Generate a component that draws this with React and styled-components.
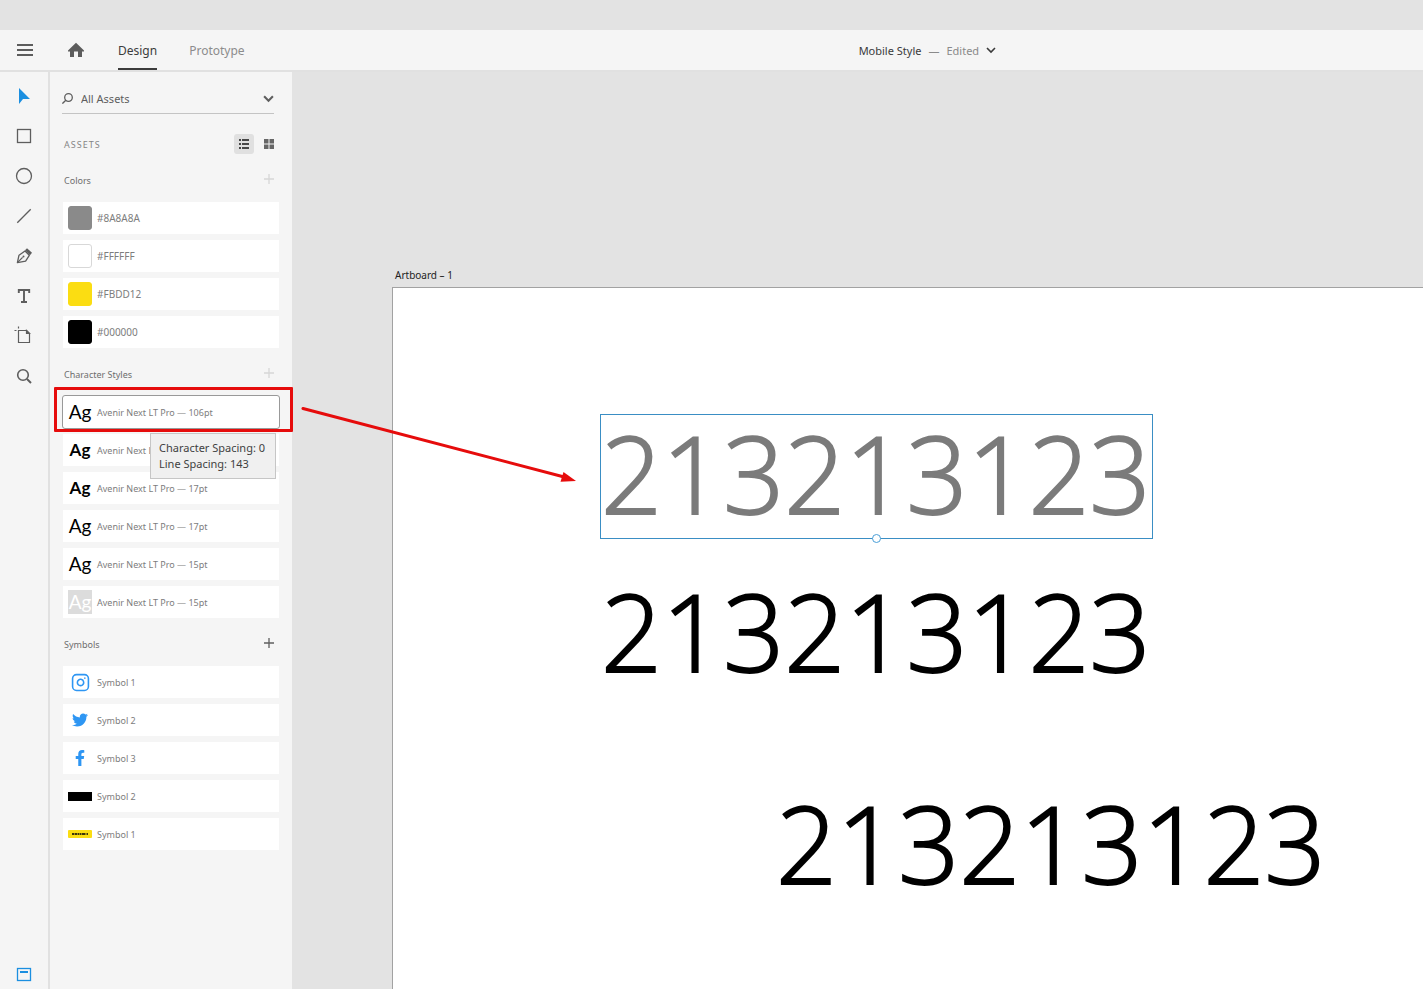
import React from "react";
import styled, { createGlobalStyle, css } from "styled-components";
import { FaTwitter, FaFacebookF } from "react-icons/fa";
import { Instagram } from "lucide-react";

const GlobalStyle = createGlobalStyle`
  *, *::before, *::after { box-sizing: border-box; }
  body { margin: 0; font-family: "Noto Sans", "Open Sans", sans-serif; font-size: 12px; color: #4b4b4b; background: #e3e3e3; }
  button, select { font: inherit; color: inherit; border: 0; background: none; padding: 0; margin: 0; }
  ul { list-style: none; padding: 0; margin: 0; }
  h2, h3, p { margin: 0; font-weight: 400; }
  svg { display: block; flex: none; }
`;

const Window = styled.div`
  display: flex;
  flex-direction: column;
  height: 100vh;
  overflow: hidden;
`;

const TitleStrip = styled.div`
  flex: none;
  height: 30px;
`;

const TopBar = styled.header`
  flex: none;
  display: flex;
  height: 42px;
  background: #f5f5f5;
  border-bottom: 2px solid #e1e1e1;
`;

const BarButton = styled.button`
  display: flex;
  align-items: center;
  margin-right: 33px;
  color: #5c5c5c;

  &:first-child {
    margin-left: 16px;
  }
`;

const Tabs = styled.nav`
  display: flex;
  gap: 32px;
`;

const Tab = styled.button`
  height: 40px;
  padding-top: 2px;
  border-bottom: 2px solid ${(p) => (p.$active ? "#3c3c3c" : "transparent")};
  color: ${(p) => (p.$active ? "#3c3c3c" : "#8c8c8c")};
`;

const DocTitle = styled.button`
  display: flex;
  align-items: center;
  gap: 7px;
  margin-left: auto;
  margin-right: 30%;
  font-size: 11px;
  color: #3a3a3a;
`;

const Status = styled.span`
  color: #8a8a8a;
`;

const Workspace = styled.div`
  flex: 1;
  display: flex;
  min-height: 0;
`;

const ToolBar = styled.nav`
  flex: none;
  display: flex;
  flex-direction: column;
  align-items: center;
  width: 50px;
  padding-top: 4px;
  background: #f5f5f5;
  border-right: 2px solid #e1e1e1;
`;

const Tool = styled.button`
  display: grid;
  place-items: center;
  width: 40px;
  height: ${(p) => (p.$last ? "30px" : "40px")};
  color: ${(p) => (p.$active ? "#1b8fe0" : "#5e5e5e")};
  margin-top: ${(p) => (p.$last ? "auto" : "0")};
`;

const Panel = styled.aside`
  position: relative;
  z-index: 1;
  flex: none;
  width: 242px;
  padding: 12px 13px 0;
  background: #f5f5f5;
`;

const Filter = styled.label`
  display: flex;
  align-items: center;
  gap: 8px;
  height: 30px;
  margin: 0 5px 0 -1px;
  border-bottom: 1px solid #c4c4c4;
  color: #5e5e5e;
`;

const FilterSelect = styled.select`
  flex: 1;
  appearance: none;
  font-size: 11px;
`;

const PanelHead = styled.div`
  display: flex;
  align-items: center;
  height: 20px;
  margin-top: 20px;
  padding-left: 1px;
`;

const PanelTitle = styled.h2`
  flex: 1;
  font-size: 9px;
  letter-spacing: 1px;
  color: #858585;
`;

const ViewButton = styled.button`
  display: grid;
  place-items: center;
  width: 20px;
  height: 20px;
  margin-left: 5px;
  border-radius: 3px;
  background: ${(p) => (p.$active ? "#e0e0e0" : "transparent")};
  color: ${(p) => (p.$active ? "#2c2c2c" : "#666")};
`;

const SectionHead = styled.div`
  display: flex;
  align-items: center;
  justify-content: space-between;
  height: 44px;
  margin-top: 4px;
  padding: 0 5px 0 1px;
`;

const SectionTitle = styled.h3`
  font-size: 9px;
  color: #6e6e6e;
`;

const AddButton = styled.button`
  color: ${(p) => (p.$enabled ? "#5f5f5f" : "#d6d6d6")};
`;

const List = styled.ul`
  display: grid;
  gap: 6px;
`;

const Item = styled.li`
  position: relative;
`;

const Row = styled.button`
  display: flex;
  align-items: center;
  gap: 5px;
  width: 100%;
  height: 32px;
  padding: 0 5px;
  background: #fff;
  font-size: ${(p) => (p.$wide ? "10px" : "9px")};
  color: #7d7d7d;
  text-align: left;
  ${(p) => p.$selected && css`
    border-radius: 2px;
    outline: 1px solid #999;
  `}
`;

const Swatch = styled.span`
  width: 24px;
  height: 24px;
  border-radius: 3px;
  background: ${(p) => p.$color};
  border: 1px solid ${(p) => (p.$color === "#FFFFFF" ? "#d8d8d8" : p.$color)};
`;

const Sample = styled.span`
  width: 24px;
  height: 24px;
  font-family: Lato, "Noto Sans", sans-serif;
  font-size: ${(p) => (p.$bold ? 17 : 19)}px;
  line-height: 24px;
  text-align: center;
  font-weight: ${(p) => (p.$bold ? 700 : 400)};
  color: ${(p) => (p.$inverse ? "#fff" : "#000")};
  background: ${(p) => (p.$inverse ? "#dcdcdc" : "transparent")};
`;

const Thumb = styled.span`
  display: grid;
  place-items: center;
  width: 24px;
  height: 24px;
  color: #2e96f3;
`;

const Highlight = styled.div`
  position: absolute;
  inset: -9px -14px -4px -9px;
  border: 3px solid #e60c0c;
  border-radius: 1px;
  pointer-events: none;
`;

const Tooltip = styled.p`
  position: absolute;
  z-index: 2;
  top: 37px;
  left: 87px;
  padding: 6px 10px 6px 8px;
  border: 1px solid #c6c6c6;
  background: #f0f0f0;
  font-size: 11px;
  line-height: 16px;
  color: #3f3f3f;
  white-space: nowrap;
`;

const Canvas = styled.main`
  position: relative;
  flex: 1;
  min-width: 0;
  overflow: hidden;
  background: #e3e3e3;
`;

const ArtboardLabel = styled.span`
  position: absolute;
  left: 103px;
  top: 195px;
  font-size: 10px;
  line-height: 16px;
  color: #222;
`;

const Artboard = styled.section`
  position: absolute;
  inset: 215px 0 0 100px;
  border: solid #a2a2a2;
  border-width: 1px 0 0 1px;
  background: #fff;
`;

const Digits = styled.p`
  position: absolute;
  left: ${(p) => p.$x}px;
  top: ${(p) => p.$y}px;
  font-family: "Open Sans", "Noto Sans", sans-serif;
  font-size: 107px;
  line-height: 116px;
  font-weight: 300;
  -webkit-text-stroke: 2px currentColor;
  white-space: nowrap;
  color: ${(p) => (p.$selected ? "#7b7b7b" : "#000")};
  ${(p) => p.$selected && css`
    width: 553px;
    height: 125px;
    border: 1px solid #3a8ec4;
  `}
`;

const Handle = styled.span`
  position: absolute;
  left: 50%;
  bottom: -5px;
  width: 9px;
  height: 9px;
  margin-left: -5px;
  border: 1px solid #4a9fd8;
  border-radius: 50%;
  background: #fff;
`;

const Arrow = styled.svg`
  position: absolute;
  left: 8px;
  top: 332px;
  pointer-events: none;
`;

const line = { fill: "none", stroke: "currentColor", strokeWidth: 1.3 };

const Chevron = ({ size = 10, weight = 1.6 }) => (
  <svg width={size} height={size} viewBox="0 0 10 10" fill="none" stroke="currentColor" strokeWidth={weight}>
    <path d="M1 3 5 7l4-4" />
  </svg>
);

const Plus = () => (
  <svg width="10" height="12" viewBox="0 0 10 12" fill="none" stroke="currentColor" strokeWidth="1.3">
    <path d="M5 0v10M0 5h10" />
  </svg>
);

const tools = [
  ["Select", <path d="M7 4v16l4-5h7z" fill="currentColor" />],
  ["Rectangle", <rect x="5.5" y="5.5" width="13" height="13" {...line} />],
  ["Ellipse", <circle cx="12" cy="12" r="7.5" {...line} />],
  ["Line", <path d="M5.3 18.7 18.7 5.3" {...line} />],
  ["Pen", <g {...line}>
    <path d="M5.4 18.6 7 11.2 13 7l4.3 4.3-3.7 5.8z" strokeLinejoin="round" />
    <path d="m5.4 18.6 5.2-5.2" />
    <circle cx="11.5" cy="12.5" r="1" fill="currentColor" stroke="none" />
    <path d="m13 6.300 2-2 5 4.400-2 2.500z" fill="currentColor" stroke="none" />
  </g>],
  ["Text", <path d="M6.800 9V6h10.400v3M12 6v12M9 18h6" fill="none" stroke="currentColor" strokeWidth="1.900" />],
  ["Artboard", <g {...line} strokeWidth="1.200">
    <path d="M6.500 6.500h8l3 3v9h-11z" />
    <path d="M14.500 6.500v3h3z" fill="currentColor" />
    <path d="M6.500 2.500v2M2.500 6.500h2" />
  </g>],
  ["Zoom", <g {...line} strokeWidth="1.600">
    <circle cx="11" cy="11" r="5.300" />
    <path d="m15 15 4 4" strokeWidth="2" />
  </g>],
];

const colors = ["#8A8A8A", "#FFFFFF", "#FBDD12", "#000000"];

const styles = [
  { size: 106, selected: true },
  { size: 17, bold: true },
  { size: 17, bold: true },
  { size: 17 },
  { size: 15 },
  { size: 15, inverse: true },
];

const symbols = [
  ["Symbol 1", <Instagram size={19} strokeWidth={2} />],
  ["Symbol 2", <FaTwitter size={16} />],
  ["Symbol 3", <FaFacebookF size={16} />],
  ["Symbol 2", <svg width="24" height="9"><rect width="24" height="9" fill="#000" /></svg>],
  ["Symbol 1", <svg width="24" height="8">
    <rect width="24" height="8" rx="1" fill="#fbdd12" />
    <path d="M4 4h16" stroke="#3d3608" strokeWidth="2" strokeDasharray="2 .5 3 .5 1 .5" />
  </svg>],
];

function Section({ title, enabled, children }) {
  return (
    <section>
      <SectionHead>
        <SectionTitle>{title}</SectionTitle>
        <AddButton $enabled={enabled} aria-label={`Add to ${title}`}><Plus /></AddButton>
      </SectionHead>
      <List>{children}</List>
    </section>
  );
}

export default function App() {
  return (
    <Window>
      <GlobalStyle />
      <TitleStrip />
      <TopBar>
        <BarButton aria-label="Menu">
          <svg width="18" height="14" viewBox="0 0 18 14" stroke="currentColor" strokeWidth="2">
            <path d="M1 2h16M1 7h16M1 12h16" />
          </svg>
        </BarButton>
        <BarButton aria-label="Home">
          <svg width="18" height="16" viewBox="0 0 18 16" fill="currentColor">
            <path d="M9 .7 17 8.600v1h-2V15h-4V9.500H7V15H3V9.600H1v-1z" />
          </svg>
        </BarButton>
        <Tabs>
          <Tab $active>Design</Tab>
          <Tab>Prototype</Tab>
        </Tabs>
        <DocTitle>
          <span>Mobile Style</span>
          <Status>—</Status>
          <Status>Edited</Status>
          <Chevron />
        </DocTitle>
      </TopBar>
      <Workspace>
        <ToolBar aria-label="Tools">
          {tools.map(([name, shape], i) => (
            <Tool key={name} $active={i === 0} aria-label={name}>
              <svg width="24" height="24" viewBox="0 0 24 24">{shape}</svg>
            </Tool>
          ))}
          <Tool $active $last aria-label="Assets panel">
            <svg width="24" height="24" viewBox="0 0 24 24">
              <rect x="5.500" y="6.500" width="13" height="12" {...line} />
              <path d="M8 10h8" stroke="currentColor" strokeWidth="2" />
            </svg>
          </Tool>
        </ToolBar>
        <Panel>
          <Filter>
            <svg width="11" height="11" viewBox="0 0 11 11" {...line}>
              <circle cx="6.500" cy="4.500" r="3.800" />
              <path d="M3.800 7.200.4 10.600" />
            </svg>
            <FilterSelect aria-label="Asset filter"><option>All Assets</option></FilterSelect>
            <Chevron size={11} weight={1.9} />
          </Filter>
          <PanelHead>
            <PanelTitle>ASSETS</PanelTitle>
            <ViewButton $active aria-label="List view">
              <svg width="10" height="10" viewBox="0 0 10 10" fill="currentColor">
                <path d="M0 0h2v2H0zM0 4h2v2H0zM0 8h2v2H0zM3 0h7v2H3zM3 4h7v2H3zM3 8h7v2H3z" fillOpacity=".85" />
              </svg>
            </ViewButton>
            <ViewButton aria-label="Grid view">
              <svg width="10" height="10" viewBox="0 0 10 10" fill="currentColor">
                <path d="M0 0h4.500v4.500H0zM5.500 0H10v4.500H5.500zM0 5.500h4.500V10H0zM5.500 5.500H10V10H5.500z" />
              </svg>
            </ViewButton>
          </PanelHead>
          <Section title="Colors">
            {colors.map((c) => (
              <Item key={c}><Row $wide><Swatch $color={c} />{c}</Row></Item>
            ))}
          </Section>
          <Section title="Character Styles">
            {styles.map((s, i) => (
              <Item key={i}>
                <Row $selected={s.selected}>
                  <Sample $bold={s.bold} $inverse={s.inverse}>Ag</Sample>
                  Avenir Next LT Pro — {s.size}pt
                </Row>
                {s.selected && <Highlight />}
                {s.selected && <Tooltip role="tooltip">Character Spacing: 0<br />Line Spacing: 143</Tooltip>}
              </Item>
            ))}
          </Section>
          <Section title="Symbols" enabled>
            {symbols.map(([name, icon], i) => (
              <Item key={i}><Row><Thumb>{icon}</Thumb>{name}</Row></Item>
            ))}
          </Section>
        </Panel>
        <Canvas>
          <ArtboardLabel>Artboard – 1</ArtboardLabel>
          <Artboard>
            <Digits $selected $x={207} $y={126}>213213123<Handle /></Digits>
            <Digits $x={208} $y={285}>213213123</Digits>
            <Digits $x={383} $y={497}>213213123</Digits>
          </Artboard>
          <Arrow width="280" height="82" viewBox="0 0 280 82">
            <path d="M3 4.500 268 74" stroke="#e60c0c" strokeWidth="3" strokeLinecap="round" />
            <path d="m276 77-15.500.800L263.500 68z" fill="#e60c0c" />
          </Arrow>
        </Canvas>
      </Workspace>
    </Window>
  );
}
